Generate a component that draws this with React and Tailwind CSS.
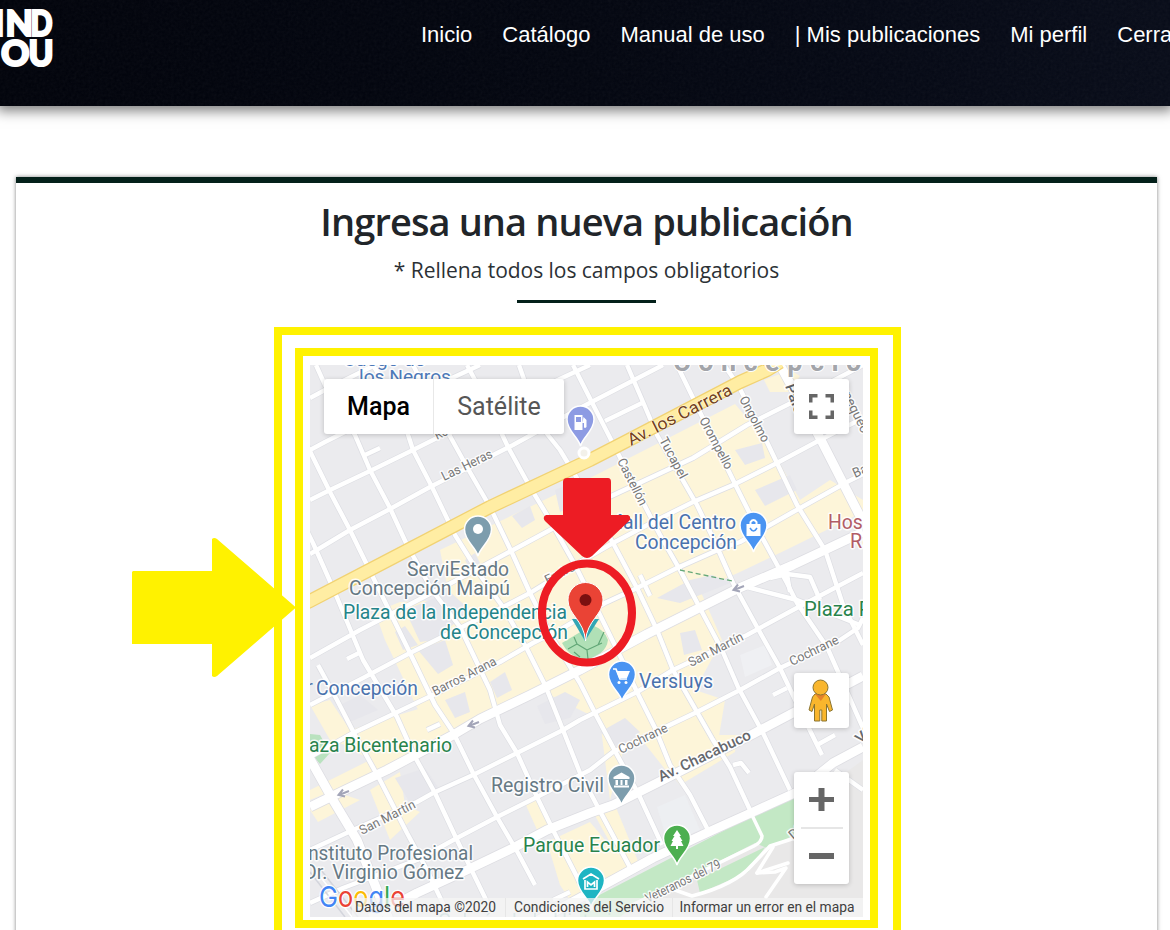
import React from "react";

const NAV = ["Inicio", "Catálogo", "Manual de uso", "| Mis publicaciones", "Mi perfil", "Cerrar sesión"];

// Streets as polylines, in the coordinates of the map's view box
const STREETS = [
  "310,398 325,390 375,365",
  "310,450 325,442 452,378 480,365",
  "310,500 330,490 370,471 413,450 437,438 564,377 590,365",
  "310,554 350,530 390,509 430,487 513,445 580,408 663,365",
  "605,421 642,403",
  "365,455 380,448",
  "310,658 360,630 453,582 513,550 550,530 607,498 693,458 747,425 793,402 863,365",
  "310,705 363,678 410,653 460,628 503,607 530,593 580,562 613,543 653,522 693,502 733,485 777,463 820,440 863,418",
  "347,659 361,652",
  "310,757 353,733 387,717 433,695 500,662 533,643 563,628 605,603 633,590 677,568 720,549 740,542 793,512 847,482 863,474",
  "310,850 353,830 417,802 433,793 473,775 517,753 563,730 580,720 637,692 673,670 747,635 793,610 863,573",
  "310,903 343,888 417,860 457,838 497,817 537,797 590,770 613,752 697,712 740,690 780,668 840,640 858,628 863,618",
  "303,523 313,543 333,588 363,660 397,717 415,757 435,793 457,840 490,908",
  "303,437 330,492 350,530 368,567 390,612 410,653 435,705 453,732 473,773 497,817 518,853 535,885",
  "316,365 325,385 355,435 370,470 390,508 407,545 432,590 460,627 490,690 500,725 517,753 537,797 553,830 577,877 592,910",
  "373,365 400,410 413,450 432,487 455,535 480,575 503,607 526,647 545,685 563,730 580,773 602,815 633,873",
  "413,365 440,418 467,467 490,507 513,555 530,593 552,637 580,683 597,717 615,751 638,793 662,845",
  "467,365 475,380 500,430 508,447 530,487 547,515 575,565 600,615 623,662 637,692 655,728 670,765 690,795 708,830",
  "519,365 540,425 560,450 578,480 600,520 613,543 638,590 657,630 673,670 697,712 713,740 730,767 750,810",
  "573,365 605,428 647,510 660,535 680,570 702,612 722,650 738,687 763,733 790,790",
  "627,365 643,402 657,435 697,505 713,538 733,583 757,627 780,668 800,710 822,755",
  "677,365 695,402 737,488 757,528 787,583 797,603 827,647 863,728",
  "722,362 738,385 767,442 797,505 825,550 843,605 863,645",
  "318,665 337,700 355,735 380,780 407,833 427,870 445,908",
  "747,587 797,600 860,625",
  "770,578 787,574 790,592",
  "787,574 810,577 820,600",
  "733,765 741,763 749,773",
  "773,695 787,688",
  "713,545 722,540",
  "640,575 650,596",
  "835,770 863,790",
  "817,745 835,735",
  "553,900 570,892",
  "427,730 440,724",
];
const WIDE = [
  "310,807 345,790 387,770 453,735 480,719 530,695 580,670 647,634 737,589 793,565 863,532",
  "370,918 417,893 467,870 513,848 547,830 590,813 613,805 657,783 753,734 863,676",
  "535,922 580,898 653,858 713,830 753,812 797,792 833,763 863,747",
  "780,365 820,438 863,522",
  "305,750 333,800 357,840 377,890 390,922",
];
const AVENUE = "300,606 310,601 400,554 490,507 590,460 623,443 740,382 767,370 780,362";

const COMMERCE = [
  "440,550 590,478 735,404 770,445 800,500 830,480 863,500 863,512 790,548 740,572 700,590 722,640 695,690 725,700 718,742 690,768 672,778 630,725 610,800 600,720 540,690 470,730 430,735 385,640 375,612 400,602 450,600",
  "764,380 790,370 800,376 790,392 770,392",
  "310,705 330,700 350,730 395,716 435,704 452,735 387,768 310,800 310,790 370,760 345,745 330,740",
  "383,782 400,772 405,805 420,812 390,840 370,790",
  "310,810 345,795 360,800 318,822",
  "525,803 540,795 550,830 538,832",
  "547,842 590,822 630,870 570,900 560,885",
  "660,760 690,735 738,735 735,752 680,785",
  "593,812 615,805 640,866 625,870",
];
const BLOCKS = [
  "555,490 575,482 585,500 560,512",
  "512,516 530,506 535,520 522,528",
  "735,450 762,443 765,458 745,465",
  "755,490 790,475 797,490 765,506",
  "657,598 690,580 712,575 730,583 680,603",
  "680,633 695,630 702,650 684,655",
  "405,610 450,592 470,610 435,640 420,642",
  "418,650 445,640 453,665 438,674",
  "445,700 465,692 470,712 455,718",
  "490,682 505,672 512,690 497,698",
  "537,706 565,692 580,700 570,718 545,724",
  "600,732 625,718 640,732 620,750",
  "340,705 360,695 378,710 350,722",
  "395,632 405,626 418,645 403,650",
  "395,778 425,768 440,790 410,803",
  "465,560 475,553 480,563 470,570",
];

const PIN = "M0 21 C-2 12 -13.500 6 -13.500 -5.500 A13.500 13.500 0 0 1 13.500 -5.500 C13.500 6 2 12 0 21 Z";

function Label({ x, y, w, rot, size = 20, fill, children, weight = 400, halo = 3 }) {
  return (
    <text
      x={x}
      y={y}
      transform={rot ? `rotate(${rot} ${x} ${y})` : undefined}
      fontSize={size}
      fontWeight={weight}
      fill={fill}
      stroke="#ffffff"
      strokeOpacity="0.85"
      strokeWidth={halo}
      strokeLinejoin="round"
      paintOrder="stroke"
      textLength={w}
      lengthAdjust="spacingAndGlyphs"
    >
      {children}
    </text>
  );
}

function Pin({ x, y, fill, children }) {
  return (
    <g transform={`translate(${x} ${y})`}>
      <path d={PIN} fill={fill} stroke="#fff" strokeWidth="1.500" />
      {children}
    </g>
  );
}

function MapCanvas() {
  return (
    <svg className="block h-full w-full font-[Roboto,sans-serif]" viewBox="310 365 553 552">
      <rect x="310" y="365" width="553" height="552" fill="#ebebee" />
      {COMMERCE.map((p) => <polygon key={p} points={p} fill="#fdf5d9" />)}
      {BLOCKS.map((p) => <polygon key={p} points={p} fill="#e7e7ec" />)}
      <polygon points="600,917 780,820 863,760 863,917" fill="#e9e8e8" />
      <polygon points="657,807 685,795 700,830 668,843" fill="#edeff2" />
      <polygon points="740,655 765,645 772,665 745,677" fill="#eff0f3" />
      <polygon points="580,917 580,905 752,816 797,796 797,834 767,848 755,843 640,902 620,917" fill="#c3e8c5" />
      <polygon points="697,880 765,847 748,872 700,893" fill="#c3e8c5" />
      <polygon points="310,734 320,735 330,753 320,764 310,752" fill="#b9e2bf" />
      <path d="M562 643 L592 625 Q605 630 608 640 Q606 655 585 660 Q568 656 562 643Z" fill="#b0e0b6" />

      <g fill="none" strokeLinejoin="round">
        {STREETS.map((p) => <polyline key={p} points={p} stroke="#dddee3" strokeWidth="5.800" />)}
        {WIDE.map((p) => <polyline key={p} points={p} stroke="#dddde2" strokeWidth="10.500" />)}
        {STREETS.map((p) => <polyline key={p} points={p} stroke="#ffffff" strokeWidth="4.400" />)}
        {WIDE.map((p) => <polyline key={p} points={p} stroke="#ffffff" strokeWidth="9" />)}
        <polyline points={AVENUE} stroke="#f1d273" strokeWidth="14" />
        <polyline points={AVENUE} stroke="#ffeda3" strokeWidth="11.500" />
        <polyline points="680,570 732,581" stroke="#65a878" strokeWidth="1.300" strokeDasharray="5 3" />
        <g stroke="#ffffff" strokeWidth="3.500" strokeLinecap="round">
          <path d="M751 813 L762 836 Q762 842 754 846 L630 906" />
          <path d="M675 890 L692 896 Q735 885 752 865 L770 846 L795 838" />
          <path d="M773 847 L757 873 L775 872 L786 868 L766 897" />
          <path d="M757 873 L788 863" />
        </g>
        <path d="M568 649 L577 644 L587 650 L602 643 M577 644 L574 637 M587 650 L588 659 M574 652 L580 657 M598 645 L604 632" stroke="#62a777" strokeWidth="1.200" />
        <g stroke="#ffffff" strokeWidth="1.500">
          <path d="M310 872 L345 917" stroke="#d3d5dc" />
          <path d="M315 870 L352 917" />
          <path d="M321 870 L358 917" stroke="#d3d5dc" />
        </g>
      </g>
      <circle cx="584" cy="453" r="5" fill="#f3f1ea" stroke="#fff" strokeWidth="3" />

      <g fill="none" stroke="#a3a5b8" strokeWidth="2">
        <path d="M744 586 L734 590 M738 584.500 L733.500 590 L740 591.500" />
        <path d="M479 722 L469 726 M473 720.500 L468.500 726 L475 727.500" />
        <path d="M349 791 L339 795 M343 789.500 L338.500 795 L345 796.500" />
      </g>

      <text x="673" y="371" fontSize="27" fontWeight="700" fill="#a3a5aa" textLength="211" stroke="#fff" strokeWidth="2" paintOrder="stroke">Concepción</text>
      <Label x="444" y="481" w="55" rot="-26" size="13" fill="#777">Las Heras</Label>
      <Label x="437" y="440" w="31" rot="-26" size="13" fill="#777">Rozas</Label>
      <Label x="631" y="446" w="115" rot="-27" size="17" fill="#73421a" halo={1}>Av. los Carrera</Label>
      <Label x="617" y="461" w="51" rot="63" size="13" fill="#777">Castellón</Label>
      <Label x="659" y="440" w="45" rot="62" size="13" fill="#777">Tucapel</Label>
      <Label x="699" y="420" w="57" rot="62" size="13" fill="#777">Orompello</Label>
      <Label x="739" y="399" w="50" rot="62" size="13" fill="#777">Ongolmo</Label>
      <Label x="785" y="386" w="50" rot="70" size="14" weight={500} fill="#5f6165">Paicaví</Label>
      <Label x="836" y="381" w="59" rot="64" size="13" fill="#777">Janequeo</Label>
      <Label x="855" y="478" w="74" rot="-24" size="13.500" fill="#777">Barros Arana</Label>
      <Label x="547" y="584" w="32" rot="-26" size="12" fill="#777">Freire</Label>
      <Label x="435" y="696" w="70" rot="-27" size="13" fill="#777">Barros Arana</Label>
      <Label x="691" y="667" w="60" rot="-27" size="13" fill="#777">San Martín</Label>
      <Label x="792" y="666" w="53" rot="-26" size="13" fill="#777">Cochrane</Label>
      <Label x="621" y="754" w="53" rot="-26" size="13" fill="#777">Cochrane</Label>
      <Label x="661" y="782" w="101" rot="-25.500" size="15" weight={500} fill="#66686d">Av. Chacabuco</Label>
      <Label x="362" y="835" w="61" rot="-27" size="13" fill="#777">San Martín</Label>
      <Label x="648" y="903" w="82" rot="-26" size="13" fill="#777">Veteranos del 79</Label>
      <Label x="860" y="744" w="42" rot="-40" size="14" weight={500} fill="#66686d">Víctor</Label>
      <Label x="793" y="840" w="36" rot="-40" size="13" fill="#777">Diego</Label>

      <Label x="345" y="366" size="18" w="80" fill="#4d79b8">Juego de</Label>
      <Label x="359" y="383" w="92" size="18" fill="#4d79b8">los Negros</Label>
      <Label x="407" y="576" w="102" fill="#667984">ServiEstado</Label>
      <Label x="349" y="595" w="161" fill="#667984">Concepción Maipú</Label>
      <Label x="343" y="619" w="224" fill="#248489">Plaza de la Independencia</Label>
      <Label x="440" y="638.500" w="128" fill="#248489">de Concepción</Label>
      <Label x="606" y="529" w="130" fill="#4a72ad">Mall del Centro</Label>
      <Label x="635" y="548.500" w="102" fill="#4a72ad">Concepción</Label>
      <Label x="828" y="529" w="72" fill="#b25c66">Hospital</Label>
      <Label x="850" y="548" w="76" fill="#b25c66">Regional</Label>
      <Label x="804" y="616" w="96" fill="#28834c">Plaza Perú</Label>
      <text x="306" y="694" fontSize="20" fill="#4a72ad">r</text>
      <Label x="316" y="694.500" w="102" fill="#4a72ad">Concepción</Label>
      <Label x="639" y="688" w="74" fill="#4a72ad">Versluys</Label>
      <Label x="292" y="752" w="160" fill="#28834c">Plaza Bicentenario</Label>
      <Label x="491" y="792" w="113" fill="#667984">Registro Civil</Label>
      <Label x="523" y="852" w="137" fill="#28834c">Parque Ecuador</Label>
      <Label x="303" y="859.500" w="170" fill="#667984">Instituto Profesional</Label>
      <Label x="304" y="878.500" w="160" fill="#667984">Dr. Virginio Gómez</Label>
      <text x="438" y="928" fontSize="20" fill="#248489" opacity="0.4">Galería de la Historia</text>

      <Pin x={580.500} y={425} fill="#8d9be3">
        <path d="M-6 -10 H2 V5 H-6Z M-4.500 -8 V-3 H.5 V-8Z M3 -8 L6 -5 V2 Q4 4 3.500 2 V-2 H2" fill="#fff" fillRule="evenodd" />
      </Pin>
      <Pin x={478} y={535} fill="#7d9dad"><circle cy="-6" r="5" fill="#fff" /></Pin>
      <Pin x={753.500} y={531} fill="#4a94f2">
        <path d="M-7 -7 H7 V5 H-7Z" fill="#fff" />
        <path d="M-3 -7 V-9 Q0 -13 3 -9 V-7" stroke="#fff" strokeWidth="2" fill="none" />
        <path d="M-3.500 -3 Q0 3 3.500 -3" stroke="#4a94f2" strokeWidth="1.500" fill="none" />
      </Pin>
      <Pin x={622} y={680} fill="#4a94f2">
        <path d="M-9 -11 H-6 L-2 -1 H5" stroke="#fff" strokeWidth="1.700" fill="none" />
        <path d="M-5.500 -9 H8 L5 -2 H-3Z" fill="#fff" />
        <circle cx="-3" cy="2.500" r="1.500" fill="#fff" /><circle cx="4" cy="2.500" r="1.500" fill="#fff" />
      </Pin>
      <Pin x={621.500} y={784} fill="#7d9dad">
        <path d="M-8 -7 L0 -11.500 L8 -7 V-5 H-8Z M-6 -4 H-3.500 V1 H-6Z M-1 -4 H1 V1 H-1Z M3.500 -4 H6 V1 H3.500Z M-7.500 1.500 H7.500 V3.500 H-7.500Z" fill="#fff" />
      </Pin>
      <Pin x={677} y={844} fill="#4caf50">
        <path d="M0 -14 L4 -8 H2.500 L5.500 -3 H4 L6.500 2 H1 V5 H-1 V2 H-6.500 L-4 -3 H-5.500 L-2.500 -8 H-4Z" fill="#fff" />
      </Pin>
      <Pin x={591} y={886} fill="#1eb5c3">
        <path d="M-8 -7 L0 -12 L8 -7 M-6 -6 V3 H6 V-6 M-3.500 1 V-4 L0 -1 L3.500 -4 V1" stroke="#fff" strokeWidth="1.700" fill="none" />
      </Pin>
      <path d="M572 619 L585 641 L599 619 Z" fill="#32a6b4" />
      <path d="M585.500 641 C584 620 568 615 568 600 A17.500 17.500 0 0 1 603 600 C603 615 587 620 585.500 641Z" fill="#ea4335" stroke="#fff" strokeWidth="1" />
      <circle cx="585.500" cy="600" r="6" fill="#7b1010" />

      <text x="319" y="907" fontSize="29" fontWeight="400" stroke="#fff" strokeWidth="2.500" paintOrder="stroke" textLength="86" lengthAdjust="spacingAndGlyphs" className="font-[Inter,sans-serif]">
        <tspan fill="#4285f4">G</tspan><tspan fill="#ea4335">o</tspan><tspan fill="#fbbc05">o</tspan><tspan fill="#4285f4">g</tspan><tspan fill="#34a853">l</tspan><tspan fill="#ea4335">e</tspan>
      </text>
      <rect x="352" y="898" width="511" height="19" fill="#f5f5f5" opacity="0.72" />
      <g fontSize="14.500" fill="#404040">
        <text x="355" y="912" textLength="141" lengthAdjust="spacingAndGlyphs">Datos del mapa ©2020</text>
        <text x="514" y="912" textLength="150" lengthAdjust="spacingAndGlyphs">Condiciones del Servicio</text>
        <text x="679.500" y="912" textLength="175" lengthAdjust="spacingAndGlyphs">Informar un error en el mapa</text>
      </g>
      <path d="M505.500 898 V917 M672.500 898 V917" stroke="#e6e6e6" strokeWidth="1" />
    </svg>
  );
}

function MapControls() {
  return (
    <div className="absolute inset-0 font-[Roboto,sans-serif]">
      <div className="absolute left-[14px] top-[14px] flex h-[55px] rounded-[3px] bg-white text-[25px] shadow-[0_1px_5px_rgba(0,0,0,0.2)]">
        <div className="flex w-[110px] items-center justify-center border-r border-[#e8e8e8] font-medium text-black">Mapa</div>
        <div className="flex w-[130px] items-center justify-center text-[#565656]">Satélite</div>
      </div>
      <div className="absolute left-[484px] top-[14px] flex h-[55px] w-[55px] items-center justify-center rounded-[3px] bg-white shadow-[0_1px_5px_rgba(0,0,0,0.2)]">
        <svg width="25" height="25" viewBox="0 0 25 25" fill="none" stroke="#666" strokeWidth="3.500">
          <path d="M1.750 8.500 V1.750 H8.500 M16.500 1.750 H23.250 V8.500 M23.250 16.500 V23.250 H16.500 M8.500 23.250 H1.750 V16.500" />
        </svg>
      </div>
      <div className="absolute left-[484px] top-[308px] flex h-[55px] w-[55px] items-center justify-center rounded-[3px] bg-white pr-[2px] shadow-[0_1px_5px_rgba(0,0,0,0.2)]">
        <svg width="26" height="44" viewBox="0 0 26 44" stroke="#8a7430" strokeWidth="1">
          <path d="M7 15 H18 L21 18 L24.500 31 L21.500 32.500 L18.500 25 V42 H13.800 V31 H11.800 V42 H6.500 V25 L4 32.500 L1 31 L4.500 18Z" fill="#f9b62d" />
          <path d="M7 15 H18 L12.800 22Z" fill="#e5822b" stroke="none" />
          <circle cx="12.500" cy="8.500" r="7.500" fill="#f9b62d" />
        </svg>
      </div>
      <div className="absolute left-[484px] top-[407px] flex h-[112px] w-[55px] flex-col items-center rounded-[3px] bg-white shadow-[0_1px_5px_rgba(0,0,0,0.2)]">
        <div className="flex h-[55px] items-center">
          <svg width="25" height="25" viewBox="0 0 25 25" fill="#666"><path d="M9.500 1 H15.500 V10 H25 V15 H15.500 V24 H9.500 V15 H0 V10 H9.500Z" /></svg>
        </div>
        <div className="h-[2px] w-[42px] bg-[#e6e6e6]" />
        <div className="flex h-[53px] items-center">
          <svg width="25" height="6" viewBox="0 0 25 6" fill="#666"><path d="M0 0 H25 V6 H0Z" /></svg>
        </div>
      </div>
    </div>
  );
}

export default function App() {
  return (
    <div className="relative h-[930px] w-[1170px] overflow-hidden bg-white">
      <header className="relative flex h-[106px] items-start bg-gradient-to-r from-[#00020a] via-[#02050f] to-[#070b18] shadow-[0_2px_12px_3px_rgba(0,0,0,0.5)]">
        <svg className="absolute inset-0 h-full w-full opacity-[0.05]">
          <filter id="grain"><feTurbulence type="fractalNoise" baseFrequency="0.35" numOctaves="2" /><feColorMatrix type="saturate" values="0" /></filter>
          <rect width="100%" height="100%" filter="url(#grain)" />
        </svg>
        <svg className="relative h-[80px] w-[421px] shrink-0 font-[Lato,sans-serif]" viewBox="0 0 421 80" fill="#fff" stroke="#fff" strokeWidth="2.200" fontSize="36" fontWeight="900">
          <text x="-6.500" y="36">I</text>
          <text x="5.500" y="36" textLength="27.500" lengthAdjust="spacingAndGlyphs">N</text>
          <text x="30.500" y="36" textLength="22" lengthAdjust="spacingAndGlyphs">D</text>
          <text x="1" y="65.500" textLength="28.500" lengthAdjust="spacingAndGlyphs">O</text>
          <text x="28.500" y="65.500" textLength="25" lengthAdjust="spacingAndGlyphs">U</text>
        </svg>
        <nav className="relative flex gap-[30px] whitespace-nowrap pt-[18px] font-['Liberation_Sans',Arial,sans-serif] text-[22px] leading-[33px] text-white">
          {NAV.map((item) => <a key={item}>{item}</a>)}
        </nav>
      </header>

      <main className="ml-[16px] mt-[71px] flex h-[800px] w-[1141px] flex-col items-center border-t-[6px] border-[#04201a] bg-white shadow-[0_0_4px_rgba(0,0,0,0.5)]">
        <h1 className="mt-[12px] whitespace-nowrap font-['Open_Sans',sans-serif] text-[38px] font-semibold leading-[52px] tracking-[-0.9px] text-[#212529]">
          Ingresa una nueva publicación
        </h1>
        <p className="mt-[8px] whitespace-nowrap font-['Open_Sans',sans-serif] text-[21px] font-normal leading-[30px] tracking-[-0.03px] text-[#2c3135]">
          * Rellena todos los campos obligatorios
        </p>
        <div className="mt-[15px] h-[3px] w-[139px] bg-[#04201a]" />

        <div className="ml-[2px] mt-[24px] h-[640px] w-[627px] shrink-0 border-8 border-[#fff200] p-[13px]">
          <div className="h-[580px] w-[583px] border-8 border-[#fff200] pl-[7px] pt-[9px]">
            <div className="relative h-[552px] w-[553px] overflow-hidden">
              <MapCanvas />
              <MapControls />
            </div>
          </div>
        </div>
      </main>

      {/* Callouts lying over the page */}
      <svg className="absolute left-0 top-0" width="1170" height="930" viewBox="0 0 1170 930">
        <path d="M133 571 H212 V539 Q214 537 217 539 L296 607.500 L217 676 Q214 678 212 676 V644 H132 V572Z" fill="#fff200" />
        <path d="M567 478 H608 Q611 478 611 482 V515 H628 Q632 517 629 521 L592 556 Q587 560 582 556 L545 521 Q542 517 546 515 H563 V482 Q563 478 567 478Z" fill="#ed1c24" />
        <ellipse cx="587" cy="613" rx="45" ry="49.500" fill="none" stroke="#ed1c24" strokeWidth="8" />
      </svg>
    </div>
  );
}
